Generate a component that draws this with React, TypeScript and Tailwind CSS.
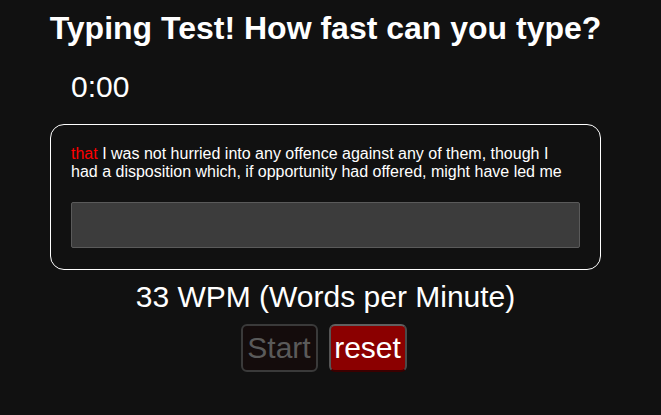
import React from "react";

export default function App() {
  return (
    <div className="min-h-screen bg-[#111111] text-white font-['Liberation_Sans',Arial,sans-serif]">
      <div className="w-[651px] flex flex-col items-center pt-[10px]">
        <h1 className="text-[32px] leading-[37px] font-bold whitespace-nowrap">
          Typing Test! How fast can you type?
        </h1>
        <div className="w-[551px] mt-[23px]">
          <div className="pl-[21px] text-[30px] leading-[34px]">0:00</div>
        </div>
        <div className="mt-[20px] w-[551px] border border-white rounded-[14px] px-[20px] pt-[20px] pb-[21px]">
          <p className="text-[16px] leading-[18px] max-w-[500px]">
            <span className="text-[#ff0000]">that</span> I was not hurried into any offence against any of them, though I had a disposition which, if opportunity had offered, might have led me
          </p>
          <input
            type="text"
            className="block mt-[21px] w-full h-[46px] bg-[#3c3c3c] border border-[#5a5a5a] rounded-[2px] outline-none"
          />
        </div>
        <div className="mt-[10px] text-[30px] leading-[34px] whitespace-nowrap">
          33 WPM (Words per Minute)
        </div>
        <div className="mt-[10px] mr-[4px] flex gap-[11px]">
          <button className="w-[77px] h-[48px] border-2 border-[#3a3a3a] bg-[#140c0c] text-[#5a5a5a] rounded-[6px] text-[30px] leading-[34px] flex items-center justify-center">
            Start
          </button>
          <button className="w-[78px] h-[48px] border-2 border-t-[#606060] border-l-[#555555] border-r-[#4a4a4a] border-b-[#3a0000] bg-[#8b0000] text-white rounded-[6px] text-[30px] leading-[34px] flex items-center justify-center">
            reset
          </button>
        </div>
      </div>
    </div>
  );
}
